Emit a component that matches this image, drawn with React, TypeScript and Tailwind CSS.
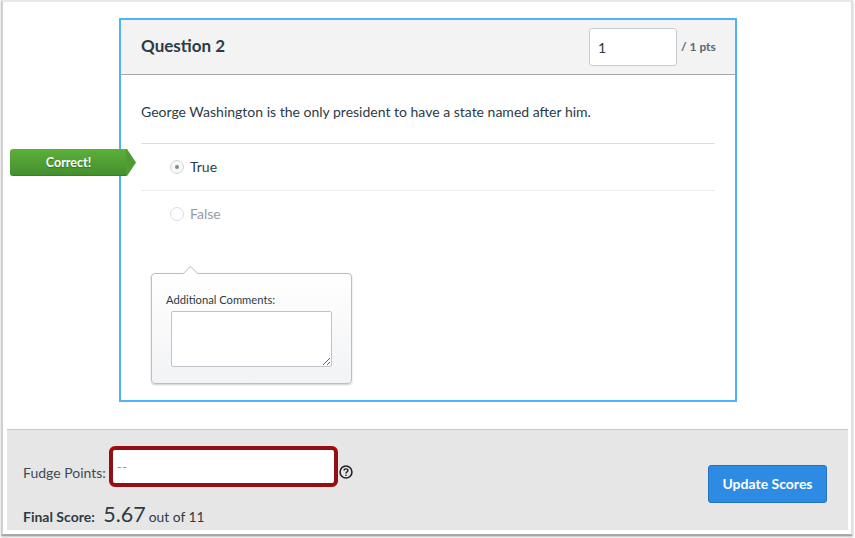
export default function App() {
  return (
    <div className="h-[538px] w-[855px] overflow-hidden bg-white font-['Lato',sans-serif] text-[#2d3b45]">
      <div className="ml-px flex h-[536px] w-[852px] flex-col border-x-2 border-t-2 border-b-2 border-x-[#d0d0d0] border-t-[#e8e8e8] border-b-[#a8a8a8] border-r-[#e0e0e0] pb-[4px] pt-4 shadow-[0_1px_2px_rgba(0,0,0,0.25)]">
        {/* Question card */}
        <div className="relative ml-[116px] h-[384px] w-[618px] shrink-0 border-2 border-[#4eb3f7]">
          <div className="flex h-[55px] items-center justify-between border-b border-[#a9a9a9] bg-[#f3f3f3] pl-5 pr-5">
            <h2 className="pb-[2px] text-[17px] font-bold">Question 2</h2>
            <div className="flex items-center">
              <input
                readOnly
                value="1"
                className="h-[38px] w-[88px] rounded-[3px] border border-[#c7cdd1] bg-white px-[8px] text-sm text-[#2d3b45] outline-none"
              />
              <span className="ml-1 w-[34px] whitespace-nowrap text-xs font-bold text-[#5b6770]">/ 1 pts</span>
            </div>
          </div>

          <div className="px-5">
            <p className="flex h-[69px] items-center border-b border-[#dcdcdc] pt-[6px] text-sm">
              George Washington is the only president to have a state named after him.
            </p>
            <div className="flex h-[47px] items-center border-b border-[#ececec] pl-[29px] text-sm">
              <span className="flex h-[14px] w-[14px] items-center justify-center rounded-full border border-[#d4d4d4] bg-[#f8f8f8]">
                <span className="h-[4px] w-[4px] rounded-full bg-[#888]" />
              </span>
              <span className="ml-[6px]">True</span>
            </div>
            <div className="flex h-[45px] items-center pl-[29px] text-sm text-[#969ca1]">
              <span className="h-[14px] w-[14px] rounded-full border border-[#dedede] bg-white" />
              <span className="ml-[6px]">False</span>
            </div>

            {/* Comment popover */}
            <div className="relative ml-[10px] mt-[37px] h-[111px] w-[201px] rounded-[4px] border border-[#b9bec6] bg-gradient-to-b from-white to-[#f2f3f5] pl-[14px] pr-[19px] pt-[18px] shadow-[0_1px_2px_rgba(0,0,0,0.2)]">
              <span className="absolute -top-[6px] left-[33px] h-[11px] w-[11px] rotate-45 border-l border-t border-[#c8ccd2] bg-white" />
              <label className="relative block text-[11.2px] leading-[15px]">Additional Comments:</label>
              <textarea
                readOnly
                className="mt-[4px] ml-[5px] block h-[56px] w-[161px] rounded-[2px] border border-[#c0c4ca] bg-white outline-none"
              />
            </div>
          </div>

          {/* Correct flag */}
          <div className="absolute left-[-111px] top-[129px] flex h-[27px]">
            <div className="flex h-[27px] w-[117px] items-center justify-center rounded-l-[3px] border-b border-[#3d7c28] bg-gradient-to-b from-[#5cb03a] to-[#45902e] pt-[3px] text-[12.5px] font-bold text-white [text-shadow:0_1px_1px_rgba(0,0,0,0.3)]">
              Correct!
            </div>
            <svg width="10" height="27" viewBox="0 0 10 27" className="-ml-px">
              <path d="M0 0 L1 0 L10 13.5 L1 27 L0 27 Z" fill="#4f9c33" />
            </svg>
          </div>
        </div>

        <div className="flex-1" />

        {/* Score footer */}
        <div className="ml-[4px] flex h-[101px] w-[841px] shrink-0 items-start justify-between border-t border-[#c8c8c8] bg-[#e6e6e6] pl-4 pr-[21px]">
          <div>
            <div className="mt-[16px] flex items-start">
              <span className="mt-[17px] text-sm text-[#3f4b54]">Fudge Points:</span>
              <div className="ml-[3px] flex h-[41px] w-[229px] items-center rounded-[6px] border-[4px] border-[#960e13] bg-white px-[4px] text-sm text-[#9a9a9a]">
                --
              </div>
              <svg width="14" height="14" viewBox="0 0 16 16" className="ml-[1px] mt-[19px]" fill="none" stroke="#222" strokeWidth="1.8">
                <circle cx="8" cy="8" r="6.8" />
                <path d="M5.8 6.400c0-1.300 1-2 2.200-2s2.200.8 2.200 1.900c0 1.600-2.200 1.500-2.200 3.300" strokeWidth="1.6" />
                <circle cx="8" cy="11.700" r="0.6" fill="#222" strokeWidth="0.6" />
              </svg>
            </div>
            <div className="mt-[14px] flex items-baseline">
              <span className="text-sm font-bold">Final Score:</span>
              <span className="ml-[8.500px] text-[21.500px] leading-[26px]">5.67</span>
              <span className="ml-[3px] text-[13.800px]">out of 11</span>
            </div>
          </div>
          <button className="mt-[35px] h-[38px] w-[119px] rounded-[3px] border border-[#2474bd] bg-[#2d8be4] text-sm font-bold text-white">
            Update Scores
          </button>
        </div>
      </div>
    </div>
  );
}
